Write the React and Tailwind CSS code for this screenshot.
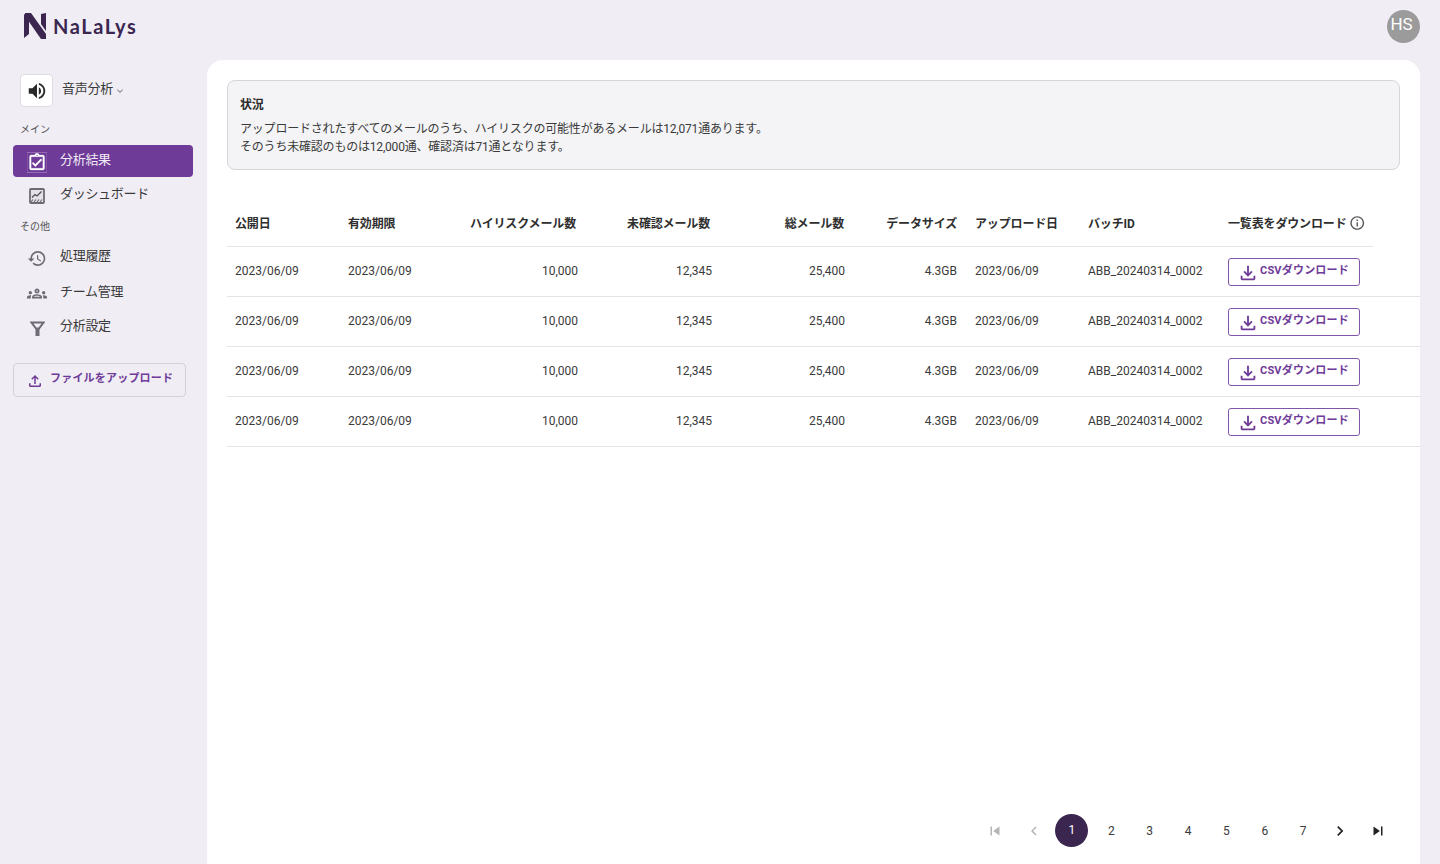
import React from 'react';
import {
    MdVolumeUp,
    MdOutlineAssignmentTurnedIn,
    MdHistory,
    MdOutlineGroups,
    MdOutlineFileUpload,
    MdOutlineFileDownload,
    MdInfoOutline,
    MdSkipPrevious,
    MdSkipNext,
    MdChevronLeft,
    MdChevronRight,
    MdKeyboardArrowDown,
} from 'react-icons/md';

const fontStack = "font-['Roboto','Noto_Sans_CJK_JP',sans-serif]";
const gridCols = 'grid grid-cols-[113px_110px_136px_134px_133px_114px_113px_140px_153px] items-center';

function LogoMark() {
    return (
        <svg width="23" height="26" viewBox="0 0 23 26" fill="#3b2650">
            <polygon points="0,1 5,4 5,21 0,25" />
            <polygon points="1,0 7,0 22,21 22,26 17,26 1,3" />
            <polygon points="17,1 22,0 22,18 17,11" />
        </svg>
    );
}

function ChartIcon() {
    return (
        <svg width="16" height="16" viewBox="0 0 16 16" fill="none" stroke="#6f6b75" strokeWidth="1.8">
            <rect x="1" y="1" width="14" height="14" rx="1" fill="#e4e2e8" />
            <path d="M3 9.5 L6 6.5 L8 8 L12.5 3.5" strokeWidth="1.3" stroke="#4f4c55" />
            <path d="M2 14 L4 11.5 M5 14 L7 11.5 M8 14 L10 11.5 M11 14 L13 11.5" strokeWidth="1.2" />
        </svg>
    );
}

function FunnelIcon() {
    return (
        <svg width="15" height="15" viewBox="0 0 15 15" fill="none" stroke="#6f6b75" strokeWidth="2">
            <path d="M1.5 1.5 H13.5 L9 7.5 H6 Z" />
            <path d="M5.5 7 H9.5 V15 H5.5 Z" fill="#6f6b75" stroke="none" />
        </svg>
    );
}

function NavItem({ icon, label, active, textOffset = '-mt-[2px]' }) {
    return (
        <div
            className={`h-8 flex items-center rounded pl-[14px] text-[13px] tracking-[-0.3px] ${
                active ? 'bg-[#6f3b98] text-[#f0ebf5]' : 'text-[#3a3a3a]'
            }`}
        >
            <span className="w-5 flex justify-center mt-[2px]">{icon}</span>
            <span className={`ml-[13px] ${textOffset}`}>{label}</span>
        </div>
    );
}

function Sidebar() {
    return (
        <aside className="w-[207px] shrink-0 pl-[13px] pr-[14px]">
            <div className="flex items-center pl-[7px] mt-[14px]">
                <div className="w-[33px] h-[33px] bg-white border border-[#dedbe3] rounded flex items-center justify-center">
                    <MdVolumeUp size={22} color="#2a2a2a" />
                </div>
                <span className="ml-[9px] text-[13px] tracking-[-0.25px] text-[#3a3a3a] -mt-[3px]">音声分析</span>
                <MdKeyboardArrowDown size={12} color="#8a8a8a" className="ml-[1px]" />
            </div>
            <div className="text-[10px] text-[#555] pl-[7px] mt-[15px] h-[15px] leading-[15px]">メイン</div>
            <div className="mt-[8px]">
                <NavItem active label="分析結果" icon={<MdOutlineAssignmentTurnedIn size={21} color="#ffffff" stroke="#ffffff" strokeWidth={0.3} />} />
            </div>
            <div className="mt-[2px]">
                <NavItem label="ダッシュボード" icon={<ChartIcon />} />
            </div>
            <div className="text-[10px] text-[#555] pl-[7px] mt-[8px] h-[15px] leading-[15px]">その他</div>
            <div className="mt-[7px] flex flex-col gap-[3px]">
                <NavItem label="処理履歴" icon={<MdHistory size={21} color="#6f6b75" />} />
                <NavItem label="チーム管理" textOffset="mt-0" icon={<MdOutlineGroups size={23} color="#6f6b75" />} />
                <NavItem label="分析設定" icon={<FunnelIcon />} />
            </div>
            <div className="mt-[20px] w-[173px] h-[34px] border border-[#d3d0d8] rounded flex items-center pl-[12px] text-[11px] font-bold text-[#6f3b98] tracking-[0.2px]">
                <MdOutlineFileUpload size={18} className="mt-[2px]" />
                <span className="ml-[6px] -mt-[2px]">ファイルをアップロード</span>
            </div>
        </aside>
    );
}

function HeaderRow() {
    const cell = 'px-2 text-[12px] font-bold text-[#2e2e2e] whitespace-nowrap tracking-[-0.15px]';
    return (
        <div className={`${gridCols} w-[1146px] h-[46px] border-b border-[#e4e4e6]`}>
            <div className={cell}>公開日</div>
            <div className={cell}>有効期限</div>
            <div className={`${cell} text-right pr-[10px]`}>ハイリスクメール数</div>
            <div className={`${cell} text-right pr-[10px]`}>未確認メール数</div>
            <div className={`${cell} text-right pr-[9px]`}>総メール数</div>
            <div className={`${cell} text-right pr-[10px]`}>データサイズ</div>
            <div className={cell}>アップロード日</div>
            <div className={cell}>バッチID</div>
            <div className={`${cell} flex items-center`}>
                一覧表をダウンロード
                <MdInfoOutline size={18} color="#555" className="ml-[2px] -mt-[1px]" />
            </div>
        </div>
    );
}

function DataRow() {
    const cell = 'px-2 -mt-[2px] text-[12px] text-[#3a3a3a] whitespace-nowrap';
    return (
        <div className="border-b border-[#e4e4e6] h-[50px] flex items-center">
            <div className={`${gridCols} w-[1146px]`}>
                <div className={cell}>2023/06/09</div>
                <div className={cell}>2023/06/09</div>
                <div className={`${cell} text-right`}>10,000</div>
                <div className={`${cell} text-right`}>12,345</div>
                <div className={`${cell} text-right`}>25,400</div>
                <div className={`${cell} text-right pr-[10px]`}>4.3GB</div>
                <div className={cell}>2023/06/09</div>
                <div className={cell}>ABB_20240314_0002</div>
                <div className="px-2">
                    <div className="w-[132px] h-[28px] border border-[#7f55a8] rounded-[3px] flex items-center pl-[8px] text-[11px] font-bold text-[#6f3b98] tracking-[0.2px]">
                        <MdOutlineFileDownload size={22} className="mt-[3px] shrink-0" />
                        <span className="ml-[1px] -mt-[1px] whitespace-nowrap">CSVダウンロード</span>
                    </div>
                </div>
            </div>
        </div>
    );
}

function Pager() {
    const base = 'w-[34px] h-[34px] rounded-full flex items-center justify-center text-[12px] text-[#3a3a3a]';
    return (
        <div className="flex justify-end items-center gap-[4.4px] pr-[23px]">
            <div className={base}><MdSkipPrevious size={18} color="#b5b5b5" className="-translate-x-[1px]" /></div>
            <div className={base}><MdChevronLeft size={18} color="#b5b5b5" /></div>
            <div className="w-[34px] h-[34px] flex items-center justify-center">
                <div className="w-[33px] h-[33px] -translate-x-[1px] -translate-y-[1px] rounded-full bg-[#3b2650] text-white text-[12px] flex items-center justify-center">1</div>
            </div>
            {[2, 3, 4, 5, 6, 7].map((n) => (
                <div key={n} className={base}>{n}</div>
            ))}
            <div className={base}><MdChevronRight size={20} color="#222" className="-translate-x-[2px]" /></div>
            <div className={base}><MdSkipNext size={18} color="#222" className="-translate-x-[2px]" /></div>
        </div>
    );
}

export default function App() {
    return (
        <div className={`${fontStack} h-[864px] w-[1440px] overflow-hidden bg-[#f0edf5] flex flex-col`}>
            <header className="h-[60px] shrink-0 flex items-start justify-between pl-[24px] pr-[20px]">
                <div className="flex items-center mt-[12px]">
                    <LogoMark />
                    <span className="ml-[6px] text-[20px] font-['Lato',sans-serif] font-bold text-[#3b2650] tracking-[1.6px] leading-[28px]">
                        NaLaLys
                    </span>
                </div>
                <div className="mt-[10px] w-[33px] h-[33px] rounded-full bg-[#9b9b9b] text-white text-[17px] flex items-center justify-center pb-[3px] pr-[4px]">
                    HS
                </div>
            </header>
            <div className="flex flex-1 min-h-0">
                <Sidebar />
                <main className="flex-1 mr-[20px] bg-white rounded-t-2xl pt-[20px] pl-[20px] flex flex-col">
                    <section className="mr-[20px] h-[90px] bg-[#f4f4f6] border border-[#d5d5da] rounded-lg px-[12px] pt-[15px] text-[12px] text-[#3a3a3a] tracking-[-0.2px]">
                        <div className="font-bold leading-[18px] text-[#2a2a2a]">状況</div>
                        <div className="mt-[6px] leading-[18px]">
                            アップロードされたすべてのメールのうち、ハイリスクの可能性があるメールは12,071通あります。
                        </div>
                        <div className="leading-[18px]">そのうち未確認のものは12,000通、確認済は71通となります。</div>
                    </section>
                    <div className="mt-[31px]">
                        <HeaderRow />
                        <DataRow />
                        <DataRow />
                        <DataRow />
                        <DataRow />
                    </div>
                    <div className="mt-auto mb-[16px]">
                        <Pager />
                    </div>
                </main>
            </div>
        </div>
    );
}
